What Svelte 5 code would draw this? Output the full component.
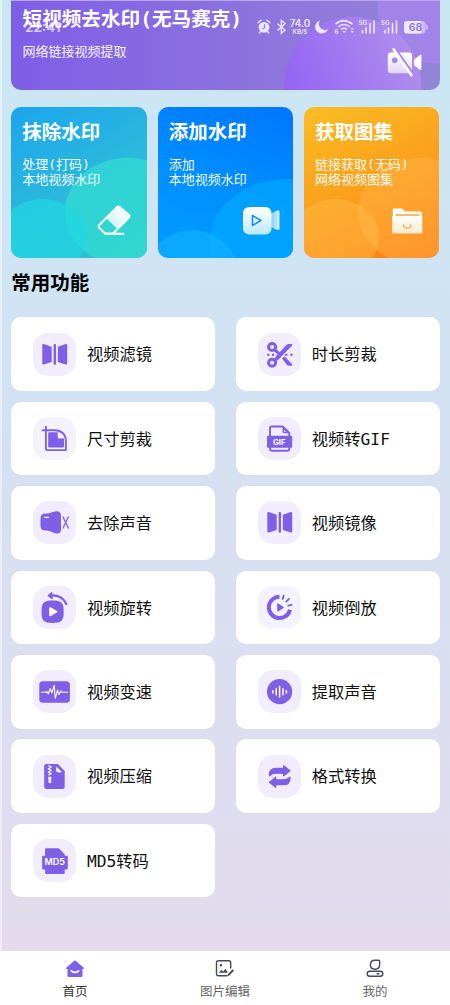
<script>
  const tools = [
    { name: '视频滤镜', icon: 'mirror' },
    { name: '时长剪裁', icon: 'scissors' },
    { name: '尺寸剪裁', icon: 'crop', pale: true },
    { name: '视频转GIF', icon: 'gif' },
    { name: '去除声音', icon: 'mute' },
    { name: '视频镜像', icon: 'mirror' },
    { name: '视频旋转', icon: 'rotate' },
    { name: '视频倒放', icon: 'reverse', pale: true },
    { name: '视频变速', icon: 'speed' },
    { name: '提取声音', icon: 'audio' },
    { name: '视频压缩', icon: 'zip' },
    { name: '格式转换', icon: 'convert' },
    { name: 'MD5转码', icon: 'md5' }
  ];
  const cards = [
    { kind: 'erase', title: '抹除水印', lines: ['处理(打码)', '本地视频水印'] },
    { kind: 'add', title: '添加水印', lines: ['添加', '本地视频水印'] },
    { kind: 'album', title: '获取图集', lines: ['链接获取(无码)', '网络视频图集'] }
  ];
</script>

<div class="screen">
  <main>
    <section class="hero">
      <svg class="art" viewBox="0 0 429 90" aria-hidden="true">
        <defs>
          <linearGradient id="orb" gradientUnits="userSpaceOnUse" x1="280" y1="90" x2="400" y2="40">
            <stop offset="0" stop-color="#9564f4" />
            <stop offset="1" stop-color="#ae8eec" />
          </linearGradient>
          <linearGradient id="cam" x1="0" y1="0" x2="0" y2="1">
            <stop offset="0" stop-color="#fff" />
            <stop offset="1" stop-color="#e2d8fa" />
          </linearGradient>
        </defs>
        <circle cx="424" cy="8" r="55" fill="#a584ea" opacity=".85" />
        <circle cx="343.700" cy="85" r="69" fill="url(#orb)" />
        <g>
          <path fill="url(#cam)" fill-rule="evenodd" d="M382 52h18.500a3 3 0 0 1 3 3v15a3 3 0 0 1-3 3H382a3 3 0 0 1-3-3V55a3 3 0 0 1 3-3zM386 57a3 3 0 1 0 .1 0z" />
          <path fill="#fff" d="M405.500 59.500l6-5q1.500-1 1.500.8v13.400q0 1.800-1.500.8l-6-4.500z" />
          <path d="M387 50l17 24.500" stroke="#a583ec" stroke-width="4" />
          <path d="M385 49l18 26" stroke="#fff" stroke-width="2.700" stroke-linecap="round" />
        </g>
      </svg>
      <h1>短视频去水印(无马赛克)</h1>
      <p>网络链接视频提取</p>
    </section>

    <section class="cards">
      {#each cards as card}
        <article class="card {card.kind}">
          <svg class="art" viewBox="0 0 135.500 151" preserveAspectRatio="none" aria-hidden="true">
            {#if card.kind === 'erase'}
              <defs>
                <linearGradient id="er" x1="1" y1="0" x2="0" y2="1">
                  <stop offset=".2" stop-color="#fff" /><stop offset="1" stop-color="#b5f2f1" />
                </linearGradient>
              </defs>
              <ellipse cx="117" cy="104.700" rx="63" ry="54" fill="#32dcd3" opacity=".75" />
              <ellipse cx="31.500" cy="130" rx="44" ry="38" fill="#1ed9e4" opacity=".65" />
              <path d="M107 99.500l11 10-11.500 12.500-11-10.500z" fill="url(#er)" />
              <path d="M106.200 100Q107.500 99 108.800 100L118 108Q119 109.200 118 110.500L102 126.500H94L88 120.500Q87 119.300 88 118.200ZM94 126.800H112.500" fill="none" stroke="#fff" stroke-width="2" stroke-linecap="round" stroke-linejoin="round" />
            {:else if card.kind === 'add'}
              <defs>
                <linearGradient id="ad" x1="0" y1="0" x2="0" y2="1">
                  <stop offset="0" stop-color="#fff" /><stop offset="1" stop-color="#bee8ff" />
                </linearGradient>
                <linearGradient id="ad2"><stop offset="0" stop-color="#79caff" /><stop offset="1" stop-color="#d6f0ff" /></linearGradient>
              </defs>
              <ellipse cx="129" cy="137" rx="78" ry="65" fill="#00acff" opacity=".6" />
              <ellipse cx="34" cy="171" rx="48" ry="48" fill="#10b2ff" opacity=".6" />
              <path d="M112 107l7-3.500q2.500-.8 2.500 1.500v16.500q0 2-2.500 1.500l-7-3.500z" fill="url(#ad2)" />
              <rect x="85" y="100" width="28.500" height="27.500" rx="6" fill="url(#ad)" />
              <path d="M94.500 108.500v10l8.500-5z" fill="none" stroke="#1191ee" stroke-width="1.600" stroke-linejoin="round" />
            {:else}
              <defs>
                <linearGradient id="al" x1="0" y1="0" x2="0" y2="1">
                  <stop offset="0" stop-color="#fff" /><stop offset="1" stop-color="#ffeacc" />
                </linearGradient>
              </defs>
              <ellipse cx="117" cy="104.700" rx="63" ry="54" fill="#ffb94e" opacity=".42" />
              <ellipse cx="31.500" cy="130" rx="44" ry="38" fill="#ffbf4c" opacity=".45" />
              <path d="M89.500 101.500H97q1.200 0 2 1l2.500 2H116q1.800 0 1.800 1.500V110H88.800v-7.500q0-1 .7-1z" fill="#fff" />
              <path d="M91.500 108h24" stroke="#f9a633" stroke-width="1.300" />
              <rect x="88.300" y="109" width="30" height="17.500" rx=".5" fill="url(#al)" />
              <path d="M99.500 118q.5 3.200 3.800 3.200t3.800-3.200" fill="none" stroke="#f7a23b" stroke-width="1.300" stroke-linecap="round" />
            {/if}
          </svg>
          <h2>{card.title}</h2>
          <p>{#each card.lines as line}<span>{line}</span>{/each}</p>
        </article>
      {/each}
    </section>

    <h2 class="heading">常用功能</h2>

    <section class="tools">
      {#each tools as tool}
        <div class="tool">
          <span class="badge" class:pale={tool.pale}>
            <svg viewBox="0 0 43 43" aria-hidden="true">
              {#if tool.icon === 'mirror'}
                <g fill="#7f5fe6">
                  <path d="M9.300 12.200q0-1.500 1.400-1.100l8 2.700v15.200l-8 2.500q-1.400.4-1.400-1zM34.200 12.200q0-1.500-1.400-1.100l-8 2.700v15.200l8 2.500q1.400.4 1.400-1z" />
                  <rect x="20.600" y="11" width="2.400" height="20.800" rx="1" />
                </g>
              {:else if tool.icon === 'scissors'}
                <g fill="none" stroke="#7f5fe6">
                  <circle cx="14.100" cy="14" r="3.500" stroke-width="3" />
                  <circle cx="14.100" cy="29.700" r="3.500" stroke-width="3" />
                  <path stroke-width="3" d="M16.500 16.700l5 4.500M16.600 27.400l5-4.500" />
                </g>
                <g fill="#7f5fe6">
                  <path d="M17.700 23.600L28.500 12q1-1 2.500-1h3.200v1.500L21.500 25.500l-3.300 2.700zM24 25.600l2.500-2.300 7.700 8v1.500h-3q-1.500 0-2.500-1z" />
                  <rect x="9.200" y="20.700" width="2.200" height="2.200" /><rect x="14" y="20.700" width="2.200" height="2.200" />
                  <rect x="27.200" y="20.700" width="2.200" height="2.200" /><rect x="32.300" y="20.700" width="2.200" height="2.200" />
                </g>
              {:else if tool.icon === 'crop'}
                <path d="M12.900 9.600v22.200q0 1.300 1.300 1.300h18.700V24c0-7-5-10.800-11-10.800H9.600" fill="none" stroke="#7f5fe6" stroke-width="1.900" stroke-linecap="round" stroke-linejoin="round" />
                <path d="M15.200 16q0-.8.800-.8h8.700v4.700q0 1.500 1.500 1.500H31v8.200q0 .8-.8.800H16q-.8 0-.8-.8z" fill="#7f5fe6" />
              {:else if tool.icon === 'gif'}
                <path d="M12 19v-7.500q0-2 2-2h10.800l6.500 6.300V31.500q0 2.300-2 2.300H14q-2 0-2-2.300z" fill="#f1edfd" stroke="#7f5fe6" stroke-width="1.900" />
                <path d="M24.500 9.300l6.800 6.900h-5.300q-1.500 0-1.500-1.500z" fill="#7f5fe6" /><path d="M26 13l2 2h-2z" fill="#f1edfd" />
                <rect x="9" y="18.800" width="25.200" height="12" rx="1" fill="#7f5fe6" />
                <text x="21.200" y="27.700" text-anchor="middle" class="glyph gif">GIF</text>
              {:else if tool.icon === 'mute'}
                <path d="M7.500 17.200q0-4.700 4.700-4.700c5.500 0 7.200-2 11-2.300q4.800-.2 4.800 4.500v13.500q0 4.700-4.500 4.200c-4-.5-6-3-11.300-3q-4.700 0-4.700-4.200z" fill="#7f5fe6" />
                <path d="M11.500 16.300h4" stroke="#f1edfd" stroke-width="1.300" stroke-linecap="round" />
                <path d="M30 16l5.300 11M35.300 16L30 27" stroke="#8c70e8" stroke-width="1.500" stroke-linecap="round" />
              {:else if tool.icon === 'rotate'}
                <path d="M8.500 25.700c0-9 2-11.200 11.100-11.200s11.100 2.200 11.100 11.200-2 11.200-11.100 11.200S8.500 34.700 8.500 25.700z" fill="#7f5fe6" />
                <path d="M16.200 22.500q0-2 1.800-1l5.700 3.300q1.300.9 0 1.800L18 29.900q-1.800 1-1.800-1z" fill="#fff" />
                <path d="M17 9.500q12-1 16.300 8.500" fill="none" stroke="#7f5fe6" stroke-width="2.300" stroke-linecap="round" />
                <path d="M14.800 9.700l4-3.400.5 6.600z" fill="#7f5fe6" stroke="#7f5fe6" stroke-linejoin="round" />
              {:else if tool.icon === 'reverse'}
                <path d="M21.500 10.700a10.700 10.700 0 1 0 10.500 13" fill="none" stroke="#7f5fe6" stroke-width="4" />
                <path d="M19.200 18q0-1.200 1-.6l5.400 3.500q.7.500 0 1l-5.400 3.500q-1 .6-1-.6z" fill="#7f5fe6" />
                <path d="M25.700 9.700l-1 3.200M31 12.900l-2.700 2.600M33.600 18.800l-3.300.9" stroke="#7f5fe6" stroke-width="1.900" stroke-linecap="round" />
              {:else if tool.icon === 'speed'}
                <rect x="6.300" y="11.300" width="30.600" height="21.400" rx="3.500" fill="#7f5fe6" />
                <path d="M8.500 22.300h4l1.200-1 1.500 2.700 2-5.300 1.700 4.300 2.200-7.700 1.200 13 2.200-8.200 1.400 4.500 2-3.800 1.300 1.500h5.500" fill="none" stroke="#fff" stroke-width="1.100" stroke-linejoin="round" stroke-linecap="round" />
              {:else if tool.icon === 'audio'}
                <circle cx="21.600" cy="21.700" r="12.600" fill="#7f5fe6" />
                <path d="M14.800 20.700v2.200M18.200 18.700v6.100M21.600 16.600v10.400M25 18.700v6.100M28.400 20.700v2.200" stroke="#fff" stroke-width="1.500" stroke-linecap="round" />
              {:else if tool.icon === 'zip'}
                <path d="M13.200 9h11.600l6.900 7v16q0 2-2 2H13.200q-2 0-2-2V11q0-2 2-2z" fill="#7f5fe6" />
                <path d="M23.300 11.500l5.700 5.800h-4.200q-1.500 0-1.500-1.500z" fill="#fff" />
                <path d="M15.500 10.500l2.500 1.500-2.500 1.700 2.500 1.600-2.500 1.700 2.500 1.600-2.500 1.700" fill="none" stroke="#fff" stroke-width="1.300" />
                <path d="M16 22.500v4.200q0 .8.800.8t.8-.8v-4.200z" fill="none" stroke="#fff" stroke-width="1.300" />
              {:else if tool.icon === 'convert'}
                <g fill="#7f5fe6" stroke="#7f5fe6" stroke-width="1.300" stroke-linejoin="round">
                  <path d="M11.500 20.800v-1.300q0-6.200 6.300-6.200h7.900v-2.500l6.200 5-6.200 5v-2.600H17.500q-3.500 0-6 2.600zM31.900 22.200v1.300q0 6.200-6.300 6.200h-7.900v2.500l-6.200-5 6.200-5v2.600h8.200q3.500 0 6-2.600z" />
                </g>
              {:else if tool.icon === 'md5'}
                <path d="M13 9.300h12.800l5.900 6v1.500h2.300q.8 0 .8.800v12q0 .8-.8.800h-2.300v3.600q0 1-1 1H13.100q-1 0-1-1v-3.600H9.900q-.8 0-.8-.8v-12q0-.8.800-.8h2.200v-6.500q0-1 .9-1z" fill="#7f5fe6" />
                <text x="21.800" y="26.400" text-anchor="middle" class="glyph md">MD5</text>
              {/if}
            </svg>
          </span>
          <span class="name">{tool.name}</span>
        </div>
      {/each}
    </section>
  </main>

  <nav>
    <div class="tab active">
      <svg width="20" height="20" viewBox="0 0 20 20" aria-hidden="true">
        <path d="M9 2q1-1 2 0l7.700 6.800q.8 1-.5 1.200h-.7v7q0 1-1 1H3.500q-1 0-1-1v-7h-.7q-1.300-.2-.5-1.200z" fill="#7f5fe6" />
        <path d="M6.300 11.800q3.700 3.300 7.400 0" fill="none" stroke="#fff" stroke-width="1.700" stroke-linecap="round" />
      </svg>
      <span>首页</span>
    </div>
    <div class="tab">
      <svg width="20" height="20" viewBox="0 0 20 20" fill="none" stroke="#444a5c" stroke-width="1.400" aria-hidden="true">
        <path d="M12 16.800H3.400q-1.900 0-1.900-1.900V3.600q0-1.900 1.900-1.900h10.400q1.900 0 1.900 1.900V9" stroke-linecap="round" />
        <circle cx="5.900" cy="6.200" r=".6" fill="#444a5c" />
        <path d="M3.800 13.700l2.600-2.600 1.800 1.300 2.300-2.600 2.300 3.900z" fill="#444a5c" stroke="none" />
        <path d="M13.300 16.200l5-5.200" stroke-width="1.900" />
        <path d="M12.500 17l.5-2 1.500 1.500z" fill="#444a5c" stroke="none" />
      </svg>
      <span>图片编辑</span>
    </div>
    <div class="tab">
      <svg width="20" height="20" viewBox="0 0 20 20" fill="none" stroke="#444a5c" stroke-width="1.400" aria-hidden="true">
        <path d="M10 1.200h3.700q.9 0 .9.900v3.600c0 2.700-2 4.500-4.600 4.500S5.400 8.400 5.400 5.700 7.400 1.200 10 1.200z" />
        <rect x="2.200" y="12.300" width="15.600" height="5" rx="2.500" />
        <path d="M11.500 14.800h3" />
      </svg>
      <span>我的</span>
    </div>
  </nav>

  <div class="status">
    <span class="time">22:41</span>
    <svg width="174" height="20" viewBox="0 0 174 20" aria-hidden="true">
      <g fill="none" stroke="#fff" stroke-width="1.400">
        <circle cx="8" cy="10.300" r="5.400" fill="#fff" stroke="none" />
        <path d="M2 5.700L5 3.200M14 5.700L11 3.200M4.500 14.500l-1.200 1.500M11.500 14.500l1.200 1.500" stroke-linecap="round" />
        <path d="M8.500 7.300v3.500L6.500 12" stroke="#957ce1" stroke-width="1.100" />
        <path d="M21.500 6.800l7.500 6.500-3.700 3V3.500l3.700 3-7.500 7" />
      </g>
      <text x="44" y="10" text-anchor="middle" class="rate">74.0</text>
      <text x="44" y="16.800" text-anchor="middle" class="unit">KB/S</text>
      <path d="M64 3.500a6.600 6.600 0 1 0 8 8.500 6 6 0 0 1-8-8.500z" fill="#fff" />
      <g fill="none" stroke="#fff" stroke-width="1.600">
        <path d="M79.500 7.200q8-7 17 0M82 10q6-5 12 0M85 12.500q3-2.500 6 0" />
        <path d="M86.500 14h3.400l-1.700 2.200z" fill="#fff" stroke="none" />
      </g>
      <text x="78.500" y="16.800" class="unit">6</text>
      <path d="M94.500 12.500l1.700-2 1.700 2zM94.500 14l1.700 2 1.700-2z" fill="#fff" />
      {#each [102.5, 125] as x}
        <text {x} y="8" class="net">5G</text>
        <path d="M{x + 4} 16v-2.500M{x + 7.500} 16v-5M{x + 11.500} 16V6.500M{x + 15.500} 16V4" stroke="#fff" stroke-width="1.600" stroke-linecap="round" />
      {/each}
      <rect x="148" y="4" width="21.500" height="12.500" rx="3.500" fill="#fff" opacity=".6" />
      <path d="M151 4h14v12.500h-14q-3 0-3-3V7q0-3 3-3z" fill="#fff" />
      <path d="M170 7.300q2 .7 2 3t-2 3z" fill="#fff" opacity=".6" />
      <text x="159.500" y="14" text-anchor="middle" class="charge">68</text>
    </svg>
  </div>
</div>

<style>
  :global(body) { margin: 0; }
  * { box-sizing: border-box; }
  .screen {
    position: relative;
    width: 450px;
    height: 1005px;
    overflow: hidden;
    display: flex;
    flex-direction: column;
    font-family: 'DejaVu Sans Mono', 'Noto Sans CJK SC', monospace;
    background: linear-gradient(#c9e7f3 0, #d0e4f3 28%, #d5e0f1 47%, #dadff1 63%, #dfddef 82%, #e4dbec 951px);
  }
  main {
    flex: 1;
    padding: 0 10.500px 0 9.300px;
    border-left: 2px solid rgba(255, 255, 255, .45);
  }
  h1, h2, p { margin: 0; white-space: nowrap; }
  .art { position: absolute; inset: 0; width: 100%; height: 100%; }
  .hero {
    position: relative;
    height: 90px;
    padding: 7px 11.300px;
    border-top: 1px solid #b9a6ef;
    border-radius: 0 0 10px 10px;
    overflow: hidden;
    color: #fff;
    background: linear-gradient(90deg, #7f5ee7, #8e74dd 60%, #9385d8);
  }
  h1 { position: relative; font-size: 19.600px; line-height: 24px; }
  .hero p { position: relative; margin-top: 11px; font-size: 13px; line-height: 18px; opacity: .93; }
  .cards {
    display: grid;
    grid-template-columns: repeat(3, 1fr);
    gap: 10.900px;
    margin-top: 17px;
  }
  .card {
    position: relative;
    height: 151px;
    padding: 14px 11px;
    border-radius: 10px;
    overflow: hidden;
    color: #fff;
  }
  .erase { background: linear-gradient(150deg, #1ba5ee, #2bbadb 55%, #31c2c8); }
  .add { background: linear-gradient(200deg, #0076ff, #0090ff 55%, #009cff); }
  .album { background: linear-gradient(155deg, #f9bd22, #fba01c 50%, #ff7912); }
  .card h2 { position: relative; font-size: 19.500px; line-height: 24px; }
  .card p { position: relative; margin-top: 12px; font-size: 13px; line-height: 15px; opacity: .95; }
  .card span { display: block; height: 15px; }
  .heading { margin-top: 14px; font-size: 19.500px; line-height: 24px; color: #000; }
  .tools {
    display: grid;
    grid-template-columns: 1fr 1fr;
    grid-auto-rows: 73.500px;
    gap: 10.950px 21.500px;
    margin-top: 21.300px;
  }
  .tool {
    display: flex;
    align-items: center;
    gap: 11px;
    padding-left: 21.700px;
    border-radius: 10px;
    background: #fff;
    font-size: 16.250px;
    line-height: 24px;
    color: #111;
    white-space: nowrap;
  }
  .name { padding-top: 2.500px; }
  .badge { width: 43px; height: 43px; border-radius: 15px; background: #f1edfd; }
  .badge.pale { background: #f4f2fc; }
  .badge svg { display: block; width: 43px; height: 43px; }
  .glyph { fill: #fff; font-family: Inter, sans-serif; font-weight: 700; }
  .gif { font-size: 7.800px; }
  .md { font-size: 9px; font-weight: 600; }
  nav {
    display: grid;
    grid-template-columns: repeat(3, 1fr);
    height: 54px;
    background: #fff;
  }
  .tab {
    display: flex;
    flex-direction: column;
    align-items: center;
    padding-top: 8px;
    font-size: 12.500px;
    color: #666;
  }
  .tab.active { color: #333; }
  .tab span { margin-top: 4px; line-height: 18px; }
  .status {
    position: absolute;
    top: 17px;
    left: 25px;
    right: 20px;
    display: flex;
    justify-content: space-between;
    color: #fff;
    opacity: .82;
    font-family: Inter, sans-serif;
  }
  .time { font-size: 13.500px; line-height: 21px; font-weight: 600; opacity: .85; }
  .status text { fill: #fff; font-weight: 600; }
  .status .rate { font-size: 9.800px; }
  .status .unit { font-size: 6.200px; }
  .status .net { font-size: 6.200px; }
  .status .charge { font-size: 10.500px; fill: #8e70dd; }
</style>
